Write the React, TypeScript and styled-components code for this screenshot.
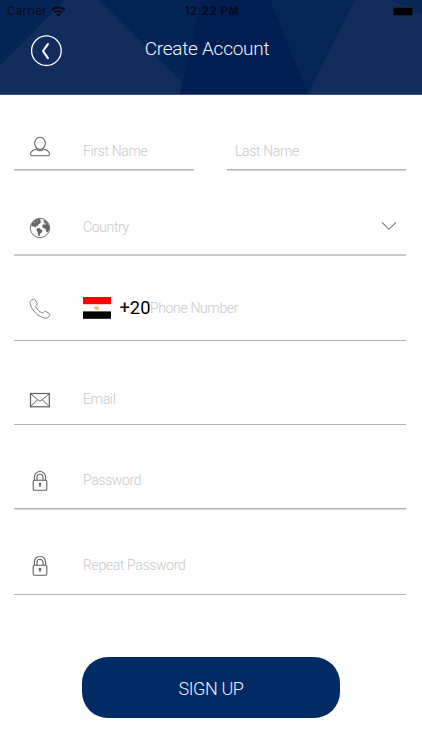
import React from 'react';
import styled, { createGlobalStyle } from 'styled-components';

const GlobalStyle = createGlobalStyle`
  * { box-sizing: border-box; }
  body { margin: 0; background: #fff; }
`;

const Screen = styled.main`
  width: 422px;
  height: 750px;
  overflow: hidden;
  background: #fefefe;
  font-family: Roboto, 'Liberation Sans', sans-serif;
  font-weight: 300;
  display: flex;
  flex-direction: column;
`;

const Header = styled.header`
  position: relative;
  flex: none;
  height: 95px;
  background: #001f55;
  border-bottom: 1px solid #42577f;
`;

const Facets = styled.svg`
  position: absolute;
  inset: 0;
`;

const HeaderContent = styled.div`
  position: relative;
`;

const StatusBar = styled.div`
  display: grid;
  grid-template-columns: 1fr auto 1fr;
  align-items: center;
  height: 22px;
  padding: 0 5px 0 7px;
  color: #050b18;
  font-family: Inter, sans-serif;
  font-size: 11.5px;
  font-weight: 400;
`;

const Carrier = styled.div`
  display: flex;
  align-items: center;
  gap: 4px;
  letter-spacing: 0.3px;
`;

const Clock = styled.div`
  font-weight: 600;
  letter-spacing: 0.5px;
`;

const BatterySlot = styled.div`
  display: flex;
  justify-content: flex-end;
`;

const NavBar = styled.div`
  display: grid;
  grid-template-columns: 64px 1fr 72px;
  align-items: start;
  padding-top: 13px;
`;

const BackButton = styled.button`
  display: block;
  width: 32px;
  height: 32px;
  margin-left: 30px;
  padding: 0;
  border: 0;
  background: none;
`;

const Title = styled.h1`
  margin: 0;
  text-align: center;
  color: #f3f6fb;
  font-size: 19px;
  font-weight: 300;
  line-height: 27px;
  letter-spacing: -0.27px;
`;

const Form = styled.form`
  flex: none;
  padding: 0 16px 0 14px;
`;

const Row = styled.div<{ $height: number; $lift: number; $line?: string; $thick?: number; $soft?: boolean }>`
  display: flex;
  align-items: flex-end;
  height: ${(p) => p.$height}px;
  padding-bottom: ${(p) => p.$lift}px;
  border-bottom: ${(p) => p.$thick ?? 1}px solid ${(p) => p.$line ?? '#b4b4b4'};
  box-shadow: ${(p) => (p.$soft ? '0 1px 0 #d6d6d6' : 'none')};
`;

const NameGroup = styled.div`
  display: grid;
  grid-template-columns: 180px 179px;
  gap: 33px;
`;

const IconSlot = styled.span<{ $raise?: number }>`
  flex: none;
  display: flex;
  align-items: center;
  width: 53px;
  height: 24px;
  margin-left: 15px;
  margin-right: 1px;
  margin-bottom: ${(p) => p.$raise ?? -1}px;
`;

const Placeholder = styled.span`
  color: #c9c9cb;
  font-size: 14px;
  line-height: 24px;
  letter-spacing: -0.35px;
  white-space: nowrap;
`;

const LastName = styled(Placeholder)`
  margin-left: 8px;
`;

const ChevronSlot = styled.span`
  display: flex;
  align-items: center;
  height: 26px;
  margin-left: auto;
  margin-right: 9px;
`;

const FlagSlot = styled.span`
  display: flex;
  align-items: center;
  height: 24px;
  margin-right: 8.5px;
`;

const DialCode = styled.span`
  width: 30.5px;
  color: #000;
  font-size: 18.3px;
  font-weight: 400;
  line-height: 24px;
  white-space: nowrap;
`;

const SignUp = styled.button`
  flex: none;
  width: 258px;
  height: 61px;
  margin: 62px 0 0 82px;
  padding: 2px 0 0;
  border: 0;
  border-radius: 26px;
  background: #002b65;
  color: #eef3fb;
  font-family: inherit;
  font-size: 18px;
  font-weight: 300;
  letter-spacing: -0.4px;
`;

const WifiIcon = () => (
  <svg width="15" height="11" viewBox="0 0 15 11" fill="none" stroke="#050b18">
    <path d="M1 3.9C4.7.5 10.3.5 14 3.9" strokeWidth="2.1" />
    <path d="M3.4 6.6c2.3-2.1 5.9-2.1 8.2 0" strokeWidth="2" />
    <path d="M5.2 8.4a3.4 3.4 0 0 1 4.6 0L7.5 10.8z" fill="#050b18" stroke="none" />
  </svg>
);

const BatteryIcon = () => (
  <svg width="25" height="11" viewBox="0 0 25 11">
    <rect x=".5" y=".5" width="21" height="10" rx="2.6" fill="none" stroke="#1b2945" />
    <rect x="1.5" y="1.7" width="19" height="7.6" rx="1.4" fill="#000" />
    <path d="M23 3.8c1.3.5 1.3 2.9 0 3.4z" fill="#17223b" />
  </svg>
);

const BackIcon = () => (
  <svg width="32" height="32" viewBox="0 0 32 32" fill="none" stroke="#fff">
    <circle cx="16.4" cy="15.7" r="14.8" strokeWidth="1.3" />
    <path d="M17.9 9.1 13 16l4.9 7.2" strokeWidth="2.1" strokeLinecap="round" strokeLinejoin="round" />
  </svg>
);

const UserIcon = () => (
  <svg width="22" height="22" viewBox="0 0 22 22" fill="none" stroke="#686868" strokeWidth="1.1">
    <ellipse cx="11" cy="7.3" rx="5.3" ry="6.1" />
    <path d="M7.3 12.9C4.3 14.2 1.5 14.8 1.5 17.9c0 1.3.7 1.8 1.8 1.8h15.4c1.1 0 1.8-.5 1.8-1.8 0-3.1-2.8-3.7-5.8-5-2.1 2.4-5.3 2.4-7.4 0Z" strokeLinejoin="round" />
  </svg>
);

const GlobeIcon = () => (
  <svg width="22" height="22" viewBox="0 0 22 22">
    <circle cx="11" cy="11" r="9.7" fill="#fff" stroke="#747474" />
    <path
      fill="#646464"
      d="M2 8.2C3.2 4.8 6 2.2 9.6 1.7l2 .9-.3 1.3 1 1.3-1.4 1.2-1.5 1-.8 1.3-1.6.7.3 1.2-1.3-.4-1.3-.9-1.7.3z M8.2 11.3l2.1-.2 1.7 1.3 1.5 1-.6 1.8-1.5 1.2-.7 2-.9 1.2-.9-2.6-.3-2.3-1.3-1.4z M14 3.2l2.6.3 2.1 2.5 1.6 3.2-.1 3.2-1.1 2-1.2 1.3-.9-1.9-.3-2-1.9-.2-1.5-1.5.3-2.2 1.5-1.1 1.5-.2-.4-.9-1.5-.1.2-1.1z"
    />
    <path d="M14.7 7.3l1.8.2.7-1M4.8 5.4l1.5.3M8 3.7l1.2.5" stroke="#fff" strokeWidth=".6" fill="none" />
  </svg>
);

const PhoneIcon = () => (
  <svg width="22" height="22" viewBox="0 0 22 22" fill="none" stroke="#858585" strokeWidth="1" strokeLinejoin="round">
    <path d="M2.6 2 4.3 1.2c.8-.4 1.5-.1 1.9.6l1.8 3.2c.4.8.2 1.5-.5 2-1 .7-1.1 1.3-.6 2.2 1.4 2.5 3.2 4.2 5.8 5.5 1 .5 1.6.3 2.2-.6.5-.8 1.2-1 2-.6l3.1 1.8c.8.5 1 1.2.6 2l-1.3 1.9c-.6.9-1.7 1.3-2.9 1.1C9.2 18.9 2.7 12.6 1.1 5.7c-.2-1.6.2-2.9 1.5-3.7Z" />
  </svg>
);

const MailIcon = () => (
  <svg width="22" height="22" viewBox="0 0 22 22" fill="none" stroke="#606060">
    <rect x="1.5" y="4.5" width="18.8" height="13.3" strokeWidth="1.2" />
    <path d="m1.7 4.9 7.7 6.4c1.1.8 2 .8 3.1 0l7.6-6.400M1.8 17.400l6.600-6.500M20 17.400l-6.500-6.500" strokeWidth="1" />
  </svg>
);

const LockIcon = () => (
  <svg width="22" height="22" viewBox="0 0 22 22" fill="none" stroke="#606060" strokeWidth="1.1">
    <rect x="4.2" y="10.3" width="13.6" height="9.9" rx="1.3" />
    <path d="M5.4 10.3V7.1a5.600 5.600 0 0 1 11.200 0v3.200M8 10.300V7.200a3 3 0 0 1 6 0v3.100" />
    <path d="M11 13.4v3.6" strokeWidth="1.3" />
    <circle cx="11" cy="14" r=".8" fill="#606060" />
  </svg>
);

const ChevronIcon = () => (
  <svg width="16" height="10" viewBox="0 0 16 10" fill="none" stroke="#777" strokeWidth="1.1">
    <path d="m1 1.300 7 7 7-7" />
  </svg>
);

const EgyptFlag = () => (
  <svg width="28" height="22" viewBox="0 0 28 22">
    <rect width="28" height="22" fill="#fff" />
    <rect width="28" height="7.2" fill="#fb0307" />
    <rect y="14.4" width="28" height="7.4" fill="#000" />
    <path d="M11 9.2l1.8.6.6-.7.8.7 1.8-.6-.3 2.7-1 .4.7.7h-3.8l.7-.7-1-.4z" fill="#e8c56b" />
  </svg>
);

const App = () => (
  <Screen>
    <GlobalStyle />
    <Header>
      <Facets width="422" height="94" viewBox="0 0 422 94">
        <path d="M0 0H201L180 94H0z" fill="#052456" />
        <path d="M0 66 65 0H99L194 94H0z" fill="#122c5c" />
        <path d="M99 0H201L184 84z" fill="#052456" />
        <path d="M201 0H270L308 94H180z" fill="#001e52" />
        <path d="M270 0H355L308 94z" fill="#062557" />
        <path d="M355 0H422V94H308z" fill="#122c5c" />
        <path d="M392 0H422V14z" fill="#092656" />
      </Facets>
      <HeaderContent>
        <StatusBar>
          <Carrier>Carrier<WifiIcon /></Carrier>
          <Clock>12:22 PM</Clock>
          <BatterySlot><BatteryIcon /></BatterySlot>
        </StatusBar>
        <NavBar>
          <BackButton type="button" aria-label="Back"><BackIcon /></BackButton>
          <Title>Create Account</Title>
        </NavBar>
      </HeaderContent>
    </Header>
    <Form>
      <NameGroup>
        <Row $height={75} $lift={6} $soft>
          <IconSlot $raise={4}><UserIcon /></IconSlot>
          <Placeholder>First Name</Placeholder>
        </Row>
        <Row $height={75} $lift={6} $soft>
          <LastName>Last Name</LastName>
        </Row>
      </NameGroup>
      <Row $height={86} $lift={15} $thick={2} $line="#cbcbcb">
        <IconSlot><GlobeIcon /></IconSlot>
        <Placeholder>Country</Placeholder>
        <ChevronSlot><ChevronIcon /></ChevronSlot>
      </Row>
      <Row $height={85} $lift={20}>
        <IconSlot><PhoneIcon /></IconSlot>
        <FlagSlot><EgyptFlag /></FlagSlot>
        <DialCode>+20</DialCode>
        <Placeholder>Phone Number</Placeholder>
      </Row>
      <Row $height={84} $lift={13}>
        <IconSlot><MailIcon /></IconSlot>
        <Placeholder>Email</Placeholder>
      </Row>
      <Row $height={84} $lift={16} $soft>
        <IconSlot><LockIcon /></IconSlot>
        <Placeholder>Password</Placeholder>
      </Row>
      <Row $height={86} $lift={17}>
        <IconSlot><LockIcon /></IconSlot>
        <Placeholder>Repeat Password</Placeholder>
      </Row>
    </Form>
    <SignUp type="button">SIGN UP</SignUp>
  </Screen>
);

export default App;
